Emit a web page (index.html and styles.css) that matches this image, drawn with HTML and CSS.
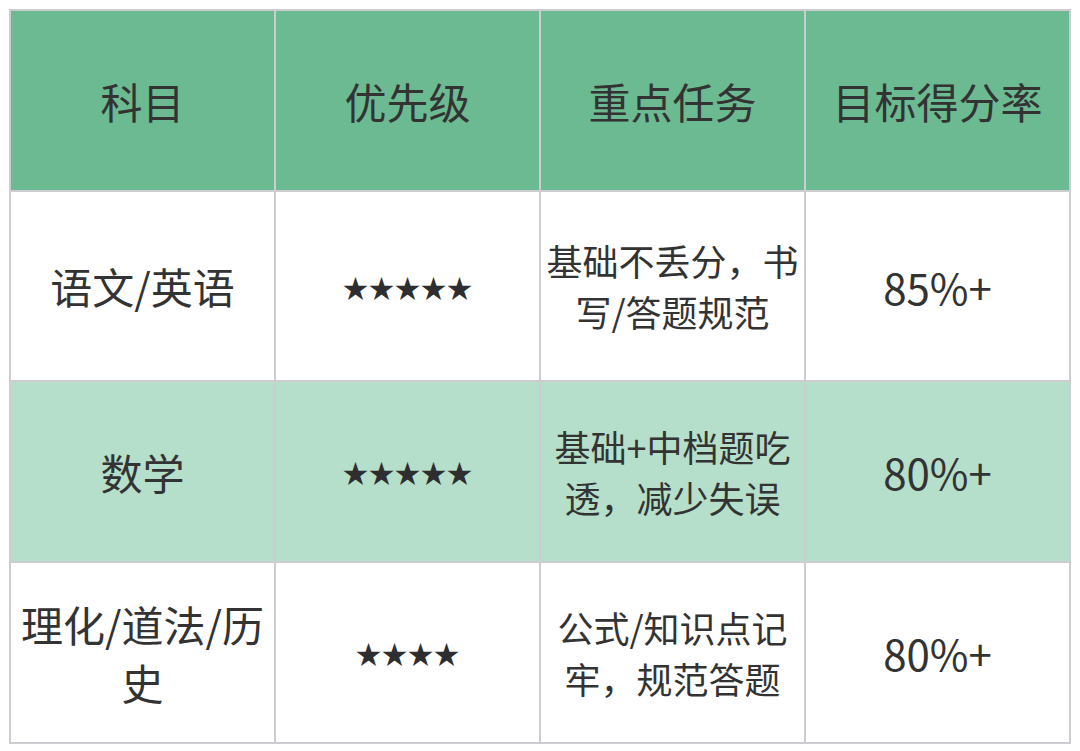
FILE: index.html
```html
<!DOCTYPE html>
<html lang="zh-CN">
<head>
<meta charset="utf-8">
<title>学习计划</title>
<link rel="stylesheet" href="styles.css">
</head>
<body>
<table class="plan">
  <colgroup><col><col><col><col></colgroup>
  <thead>
    <tr class="head">
      <th>科目</th>
      <th>优先级</th>
      <th>重点任务</th>
      <th>目标得分率</th>
    </tr>
  </thead>
  <tbody>
    <tr class="r1">
      <td class="subj">语文/英语</td>
      <td class="stars">★★★★★</td>
      <td class="task">基础不丢分，书写/答题规范</td>
      <td class="pct">85%+</td>
    </tr>
    <tr class="r2 alt">
      <td class="subj">数学</td>
      <td class="stars">★★★★★</td>
      <td class="task">基础+中档题吃透，减少失误</td>
      <td class="pct">80%+</td>
    </tr>
    <tr class="r3">
      <td class="subj">理化/道法/历史</td>
      <td class="stars">★★★★</td>
      <td class="task">公式/知识点记牢，规范答题</td>
      <td class="pct">80%+</td>
    </tr>
  </tbody>
</table>
</body>
</html>
```
FILE: styles.css
```css
html, body {
  margin: 0;
  padding: 0;
  background: #ffffff;
}
body {
  padding: 9px 0 0 9px;
  font-family: "Noto Sans CJK SC", "Noto Sans", sans-serif;
  color: #333333;
}
.plan {
  width: 1062px;
  table-layout: fixed;
  border-collapse: collapse;
  border: 2px solid #cdcdd1;
}
.plan th, .plan td {
  border: 2px solid #cdcdd1;
  text-align: center;
  vertical-align: middle;
  padding: 0 6px;
}
.head {
  height: 181px;
  background: #6cba91;
}
.head th {
  font-weight: 400;
  font-size: 42px;
  color: #333333;
}
.r1 { height: 190px; }
.r2 { height: 181px; }
.r3 { height: 181px; }
.alt { background: #b5dfca; }
.subj {
  font-size: 42px;
  line-height: 58px;
}
.stars {
  font-size: 26px;
  color: #2e2e30;
}
.plan td.task {
  font-size: 36px;
  line-height: 51px;
  padding: 0 3px;
}
.pct {
  font-size: 42px;
}
```
